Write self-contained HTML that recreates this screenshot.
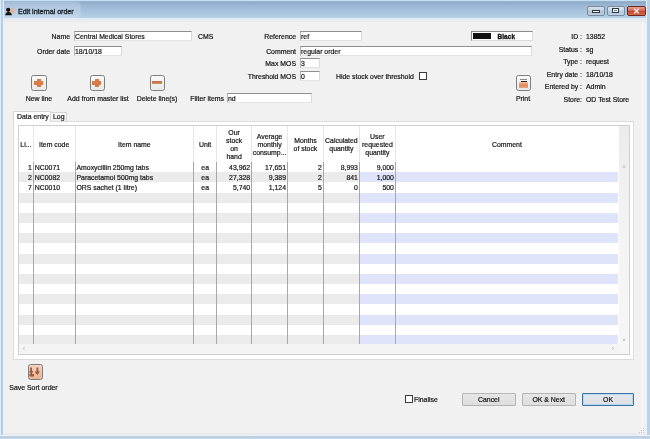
<!DOCTYPE html>
<html><head><meta charset="utf-8">
<style>
*{box-sizing:border-box;margin:0;padding:0}
html,body{width:650px;height:439px;overflow:hidden;background:#bfd3ea}
body{position:relative;font-family:"Liberation Sans",sans-serif;font-size:6.9px;color:#151515}
.a{position:absolute;white-space:nowrap}
.t{-webkit-text-stroke:0.2px #151515}
.lbl{text-align:right}
.inp{background:#fff;border:1px solid #b4b4b4;border-top-color:#8f8f8f;border-bottom-color:#e3e3e3;border-right-color:#dadada}
.btn{background:linear-gradient(180deg,#e6e6e6,#dedede);border:1px solid #b4b4b4;border-radius:1px;text-align:center}
.ico{width:16px;height:16px;border:1.5px solid #7e7e7e;border-radius:2.5px;background:linear-gradient(180deg,#fafafa,#e8e8e8)}
</style></head><body><div id="root" style="position:absolute;left:0;top:0;width:650px;height:439px;filter:blur(0.35px);">
<div class="a" style="left:0;top:0;width:650px;height:20px;background:linear-gradient(180deg,#c4e0f6 0,#c4e0f6 0.8px,#8eaac6 1.6px,#a0bad7 7px,#b1cde4 16.5px,#bccfe0 17.5px,#e2ebf7 18.5px,#e8eef7 20px)"></div>
<div class="a" style="left:4px;top:20px;width:642px;height:415px;background:#f1f1f1"></div>
<div class="a" style="left:4px;top:20px;width:642px;height:3px;background:linear-gradient(180deg,#e8eef7 0,#ebebeb 1px,#ededed 2px,#f1f1f1 3px)"></div>
<div class="a" style="left:0;top:0;width:4px;height:439px;background:linear-gradient(90deg,#d4ecfb 0,#d4ecfb 1px,#b9cde2 1px,#b9cde2 3px,#e6f1f8 3px)"></div>
<div class="a" style="left:646px;top:0;width:4px;height:439px;background:linear-gradient(90deg,#e3f3f8 0,#e3f3f8 1px,#bcd1ea 1px)"></div>
<div class="a" style="left:4px;top:433px;width:642px;height:1.5px;background:#eaeaee"></div>
<div class="a" style="left:0;top:435px;width:650px;height:4px;background:linear-gradient(180deg,#f2f7fc 0,#e8f0f8 0.8px,#b8c8da 1.6px,#c2d6ec 3px)"></div>
<div class="a" style="left:3px;top:1.5px;width:77px;height:16px;background:rgba(225,238,250,0.28);border-radius:4px;box-shadow:0 0 2px 1px rgba(225,238,250,0.2)"></div>
<div class="a t" style="left:18px;top:7.8px;line-height:8px;font-size:7.05px;color:#141c26;-webkit-text-stroke:0.3px #141c26">Edit internal order</div>
<svg class="a" style="left:5px;top:7px" width="11" height="9" viewBox="0 0 11 9">
<circle cx="7.3" cy="3.9" r="2.7" fill="#d9b9a2"/>
<circle cx="3.2" cy="2.8" r="2.1" fill="#111"/>
<path d="M0.3 8.2 C0.3 5.6 1.8 4.9 3.3 4.9 C5 4.9 6.9 5.6 6.9 8.2 Z" fill="#111"/>
</svg>
<div class="a" style="left:586.5px;top:5.5px;width:18.5px;height:10.5px;border:1px solid #7a8ba0;border-radius:2px;background:linear-gradient(180deg,#d6e0ec,#c3d0e0 45%,#b3c3d6 50%,#bccbdc)"></div>
<div class="a" style="left:592px;top:10.3px;width:7.5px;height:2.8px;background:#f6f8fb;border:0.8px solid #2c3744"></div>
<div class="a" style="left:606.5px;top:5.5px;width:18.5px;height:10.5px;border:1px solid #7a8ba0;border-radius:2px;background:linear-gradient(180deg,#d8e6f2,#c6d9ea 45%,#b2cade 50%,#bcd3e6)"></div>
<div class="a" style="left:612px;top:7.8px;width:7px;height:5px;border:1px solid #2c3744;border-top-width:1.6px;background:#f6f8fb"></div>
<div class="a" style="left:613.6px;top:9.6px;width:3.8px;height:1.8px;background:#7a8590"></div>
<div class="a" style="left:626.5px;top:5.5px;width:19.5px;height:10.5px;border:1px solid #6a2a20;border-radius:2px;background:linear-gradient(180deg,#e8a090,#d5654e 45%,#c3442a 50%,#d86a48)"></div>
<svg class="a" style="left:633px;top:7.8px" width="7" height="6" viewBox="0 0 7 6"><path d="M1.2 0.8 L5.8 5.2 M5.8 0.8 L1.2 5.2" stroke="#f8eeee" stroke-width="1.5"/></svg>
<div class="a t" style="left:20px;top:31.8px;line-height:9px;width:50px;text-align:right;">Name</div>
<div class="a inp" style="left:74px;top:31px;width:118px;height:10px"></div>
<div class="a t" style="left:75px;top:32.3px;line-height:9px;">Central Medical Stores</div>
<div class="a t" style="left:198px;top:31.8px;line-height:9px;">CMS</div>
<div class="a t" style="left:20px;top:46.8px;line-height:9px;width:50px;text-align:right;">Order date</div>
<div class="a inp" style="left:74px;top:46px;width:48px;height:10px"></div>
<div class="a t" style="left:75px;top:47.3px;line-height:9px;">18/10/18</div>
<div class="a t" style="left:240px;top:31.8px;line-height:9px;width:56px;text-align:right;">Reference</div>
<div class="a inp" style="left:300px;top:31px;width:62px;height:10px"></div>
<div class="a t" style="left:301px;top:32.3px;line-height:9px;">ref</div>
<div class="a t" style="left:240px;top:46.8px;line-height:9px;width:56px;text-align:right;">Comment</div>
<div class="a inp" style="left:300px;top:46px;width:232px;height:10px"></div>
<div class="a t" style="left:301px;top:47.3px;line-height:9px;">regular order</div>
<div class="a t" style="left:240px;top:58.699999999999996px;line-height:9px;width:56px;text-align:right;">Max MOS</div>
<div class="a inp" style="left:300px;top:57.9px;width:20px;height:10px"></div>
<div class="a t" style="left:301px;top:59.199999999999996px;line-height:9px;">3</div>
<div class="a t" style="left:220px;top:71.7px;line-height:9px;width:76px;text-align:right;">Threshold MOS</div>
<div class="a inp" style="left:300px;top:70.9px;width:20px;height:10px"></div>
<div class="a t" style="left:301px;top:72.2px;line-height:9px;">0</div>
<div class="a t" style="left:336px;top:71.8px;line-height:9px;">Hide stock over threshold</div>
<div class="a" style="left:419px;top:72px;width:8px;height:8px;border:1px solid #3a3a3a;background:#fff"></div>
<div class="a" style="left:471px;top:31px;width:62px;height:10px;border:1px solid #8a8a8a;border-bottom-color:#dcdcdc;border-right-color:#dcdcdc;background:#fff"></div>
<div class="a" style="left:473px;top:33px;width:18px;height:6px;background:#111"></div>
<div class="a t" style="left:497.5px;top:31.8px;line-height:9px;font-weight:bold;font-size:6.4px;-webkit-text-stroke:0.35px #111;letter-spacing:0.1px">Black</div>
<div class="a t" style="left:520px;top:32.199999999999996px;line-height:9px;width:62px;text-align:right;">ID :</div>
<div class="a t" style="left:586px;top:32.199999999999996px;line-height:9px;">13852</div>
<div class="a t" style="left:520px;top:44.699999999999996px;line-height:9px;width:62px;text-align:right;">Status :</div>
<div class="a t" style="left:586px;top:44.699999999999996px;line-height:9px;">sg</div>
<div class="a t" style="left:520px;top:57.199999999999996px;line-height:9px;width:62px;text-align:right;">Type :</div>
<div class="a t" style="left:586px;top:57.199999999999996px;line-height:9px;">request</div>
<div class="a t" style="left:520px;top:69.7px;line-height:9px;width:62px;text-align:right;">Entry date :</div>
<div class="a t" style="left:586px;top:69.7px;line-height:9px;">18/10/18</div>
<div class="a t" style="left:520px;top:82.2px;line-height:9px;width:62px;text-align:right;">Entered by :</div>
<div class="a t" style="left:586px;top:82.2px;line-height:9px;">Admin</div>
<div class="a t" style="left:520px;top:94.7px;line-height:9px;width:62px;text-align:right;">Store:</div>
<div class="a t" style="left:586px;top:94.7px;line-height:9px;">OD Test Store</div>
<div class="a ico" style="left:31.1px;top:75.3px;width:15.7px;height:15.5px"></div>
<div class="a" style="left:36.50px;top:78.70px;width:4.2px;height:8.8px;background:#d97a48"></div>
<div class="a" style="left:34.20px;top:81.00px;width:8.8px;height:4.2px;background:#d97a48"></div>
<div class="a t" style="left:14px;top:93.8px;line-height:9px;width:50px;text-align:center;">New line</div>
<div class="a ico" style="left:90px;top:75.3px;width:14.8px;height:15.5px"></div>
<div class="a" style="left:94.70px;top:78.70px;width:4.2px;height:8.8px;background:#d97a48"></div>
<div class="a" style="left:92.40px;top:81.00px;width:8.8px;height:4.2px;background:#d97a48"></div>
<div class="a t" style="left:57px;top:93.8px;line-height:9px;width:82px;text-align:center;">Add from master list</div>
<div class="a ico" style="left:149.8px;top:75.3px;width:15px;height:15.3px"></div>
<div class="a" style="left:152px;top:81px;width:9.8px;height:3.4px;background:linear-gradient(180deg,#c46a44,#d98a62)"></div>
<div class="a t" style="left:127px;top:93.8px;line-height:9px;width:60px;text-align:center;">Delete line(s)</div>
<div class="a t" style="left:168px;top:94.3px;line-height:9px;width:56px;text-align:right;">Filter items</div>
<div class="a inp" style="left:227px;top:93px;width:85px;height:10px"></div>
<div class="a t" style="left:228px;top:94.3px;line-height:9px;">nd</div>
<div class="a ico" style="left:515.6px;top:75px;width:15.6px;height:15.6px"></div>
<div class="a" style="left:520.3px;top:78.9px;width:6.8px;height:1.2px;background:#8a8a8a"></div>
<div class="a" style="left:520.6px;top:80.8px;width:6.6px;height:1.2px;background:#222"></div>
<div class="a" style="left:519px;top:82px;width:9.2px;height:6.2px;background:linear-gradient(180deg,#f6c4a0,#e4895a 50%,#eda47c);border-radius:0.5px"></div>
<div class="a t" style="left:501px;top:94.3px;line-height:9px;width:44px;text-align:center;">Print</div>
<div class="a" style="left:13px;top:121px;width:621px;height:239px;background:#fff;border:1px solid #dcdcdc"></div>
<div class="a" style="left:641.5px;top:22px;width:1px;height:413px;background:#f8f8f8"></div>
<div class="a" style="left:13px;top:111px;width:38px;height:11px;background:#fff;border:1px solid #d6d6d6;border-bottom:none"></div>
<div class="a t" style="left:17px;top:111.7px;line-height:9px;">Data entry</div>
<div class="a" style="left:51px;top:111.8px;width:16px;height:9.7px;background:linear-gradient(180deg,#f8f8f8,#f0f0f0);border:1px solid #d6d6d6;border-left:none;border-bottom:none"></div>
<div class="a t" style="left:53px;top:112.2px;line-height:9px;">Log</div>
<div class="a" style="left:18px;top:125px;width:612px;height:230px;background:#fff;border:1px solid #cfcfcf"></div>
<div class="a" style="left:19px;top:172.17px;width:340.4px;height:10.17px;background:#ebebeb"></div>
<div class="a" style="left:359.4px;top:172.17px;width:259.1px;height:10.17px;background:#e0e4fa"></div>
<div class="a" style="left:19px;top:192.51px;width:340.4px;height:10.17px;background:#ebebeb"></div>
<div class="a" style="left:359.4px;top:192.51px;width:259.1px;height:10.17px;background:#e0e4fa"></div>
<div class="a" style="left:19px;top:212.85px;width:340.4px;height:10.17px;background:#ebebeb"></div>
<div class="a" style="left:359.4px;top:212.85px;width:259.1px;height:10.17px;background:#e0e4fa"></div>
<div class="a" style="left:19px;top:233.19px;width:340.4px;height:10.17px;background:#ebebeb"></div>
<div class="a" style="left:359.4px;top:233.19px;width:259.1px;height:10.17px;background:#e0e4fa"></div>
<div class="a" style="left:19px;top:253.53px;width:340.4px;height:10.17px;background:#ebebeb"></div>
<div class="a" style="left:359.4px;top:253.53px;width:259.1px;height:10.17px;background:#e0e4fa"></div>
<div class="a" style="left:19px;top:273.87px;width:340.4px;height:10.17px;background:#ebebeb"></div>
<div class="a" style="left:359.4px;top:273.87px;width:259.1px;height:10.17px;background:#e0e4fa"></div>
<div class="a" style="left:19px;top:294.21px;width:340.4px;height:10.17px;background:#ebebeb"></div>
<div class="a" style="left:359.4px;top:294.21px;width:259.1px;height:10.17px;background:#e0e4fa"></div>
<div class="a" style="left:19px;top:314.55px;width:340.4px;height:10.17px;background:#ebebeb"></div>
<div class="a" style="left:359.4px;top:314.55px;width:259.1px;height:10.17px;background:#e0e4fa"></div>
<div class="a" style="left:19px;top:334.89px;width:340.4px;height:9.11px;background:#ebebeb"></div>
<div class="a" style="left:359.4px;top:334.89px;width:259.1px;height:9.11px;background:#e0e4fa"></div>
<div class="a" style="left:618.5px;top:126px;width:10.5px;height:228px;background:linear-gradient(180deg,#ebebeb 0,#efefef 40px,#f4f4f4 120px,#f6f6f6)"></div>
<div class="a" style="left:19px;top:344px;width:600px;height:10px;background:#f4f4f4"></div>
<div class="a" style="left:32.8px;top:126px;width:1px;height:36px;background:#e6e6e6"></div>
<div class="a" style="left:32.8px;top:162px;width:1px;height:182px;background:#a8a8a8"></div>
<div class="a" style="left:74.5px;top:126px;width:1px;height:36px;background:#e6e6e6"></div>
<div class="a" style="left:74.5px;top:162px;width:1px;height:182px;background:#a8a8a8"></div>
<div class="a" style="left:193.3px;top:126px;width:1px;height:36px;background:#e6e6e6"></div>
<div class="a" style="left:193.3px;top:162px;width:1px;height:182px;background:#a8a8a8"></div>
<div class="a" style="left:216.0px;top:126px;width:1px;height:36px;background:#e6e6e6"></div>
<div class="a" style="left:216.0px;top:162px;width:1px;height:182px;background:#a8a8a8"></div>
<div class="a" style="left:251.2px;top:126px;width:1px;height:36px;background:#e6e6e6"></div>
<div class="a" style="left:251.2px;top:162px;width:1px;height:182px;background:#a8a8a8"></div>
<div class="a" style="left:287.0px;top:126px;width:1px;height:36px;background:#e6e6e6"></div>
<div class="a" style="left:287.0px;top:162px;width:1px;height:182px;background:#a8a8a8"></div>
<div class="a" style="left:322.9px;top:126px;width:1px;height:36px;background:#e6e6e6"></div>
<div class="a" style="left:322.9px;top:162px;width:1px;height:182px;background:#a8a8a8"></div>
<div class="a" style="left:358.9px;top:126px;width:1px;height:36px;background:#e6e6e6"></div>
<div class="a" style="left:358.9px;top:162px;width:1px;height:182px;background:#a8a8a8"></div>
<div class="a" style="left:394.9px;top:126px;width:1px;height:36px;background:#e6e6e6"></div>
<div class="a" style="left:394.9px;top:162px;width:1px;height:182px;background:#a8a8a8"></div>
<div class="a t" style="left:18.5px;top:140.8px;line-height:8px;width:14.8px;text-align:center;">Li...</div>
<div class="a t" style="left:33.3px;top:140.8px;line-height:8px;width:41.7px;text-align:center;">Item code</div>
<div class="a t" style="left:75.0px;top:140.8px;line-height:8px;width:118.8px;text-align:center;">Item name</div>
<div class="a t" style="left:193.8px;top:140.8px;line-height:8px;width:22.7px;text-align:center;">Unit</div>
<div class="a t" style="left:216.5px;top:128.8px;line-height:8px;width:35.2px;text-align:center;">Our<br>stock<br>on<br>hand</div>
<div class="a t" style="left:251.7px;top:132.8px;line-height:8px;width:35.8px;text-align:center;">Average<br>monthly<br>consump...</div>
<div class="a t" style="left:287.5px;top:136.8px;line-height:8px;width:35.9px;text-align:center;">Months<br>of stock</div>
<div class="a t" style="left:323.4px;top:136.8px;line-height:8px;width:36.0px;text-align:center;">Calculated<br>quantity</div>
<div class="a t" style="left:359.4px;top:132.8px;line-height:8px;width:36.0px;text-align:center;">User<br>requested<br>quantity</div>
<div class="a t" style="left:395.4px;top:140.8px;line-height:8px;width:223.1px;text-align:center;">Comment</div>
<div class="a t" style="left:18.5px;top:162.70000000000002px;line-height:10.17px;width:14.8px;text-align:right;padding:0 1.5px">1</div>
<div class="a t" style="left:33.3px;top:162.70000000000002px;line-height:10.17px;width:41.7px;text-align:left;padding:0 1.5px">NC0071</div>
<div class="a t" style="left:75.0px;top:162.70000000000002px;line-height:10.17px;width:118.8px;text-align:left;padding:0 1.5px">Amoxycillin 250mg tabs</div>
<div class="a t" style="left:193.8px;top:162.70000000000002px;line-height:10.17px;width:22.7px;text-align:center;padding:0 1.5px">ea</div>
<div class="a t" style="left:216.5px;top:162.70000000000002px;line-height:10.17px;width:35.2px;text-align:right;padding:0 1.5px">43,962</div>
<div class="a t" style="left:251.7px;top:162.70000000000002px;line-height:10.17px;width:35.8px;text-align:right;padding:0 1.5px">17,651</div>
<div class="a t" style="left:287.5px;top:162.70000000000002px;line-height:10.17px;width:35.9px;text-align:right;padding:0 1.5px">2</div>
<div class="a t" style="left:323.4px;top:162.70000000000002px;line-height:10.17px;width:36.0px;text-align:right;padding:0 1.5px">8,993</div>
<div class="a t" style="left:359.4px;top:162.70000000000002px;line-height:10.17px;width:36.0px;text-align:right;padding:0 1.5px">9,000</div>
<div class="a t" style="left:18.5px;top:172.87px;line-height:10.17px;width:14.8px;text-align:right;padding:0 1.5px">2</div>
<div class="a t" style="left:33.3px;top:172.87px;line-height:10.17px;width:41.7px;text-align:left;padding:0 1.5px">NC0082</div>
<div class="a t" style="left:75.0px;top:172.87px;line-height:10.17px;width:118.8px;text-align:left;padding:0 1.5px">Paracetamol 500mg tabs</div>
<div class="a t" style="left:193.8px;top:172.87px;line-height:10.17px;width:22.7px;text-align:center;padding:0 1.5px">ea</div>
<div class="a t" style="left:216.5px;top:172.87px;line-height:10.17px;width:35.2px;text-align:right;padding:0 1.5px">27,328</div>
<div class="a t" style="left:251.7px;top:172.87px;line-height:10.17px;width:35.8px;text-align:right;padding:0 1.5px">9,389</div>
<div class="a t" style="left:287.5px;top:172.87px;line-height:10.17px;width:35.9px;text-align:right;padding:0 1.5px">2</div>
<div class="a t" style="left:323.4px;top:172.87px;line-height:10.17px;width:36.0px;text-align:right;padding:0 1.5px">841</div>
<div class="a t" style="left:359.4px;top:172.87px;line-height:10.17px;width:36.0px;text-align:right;padding:0 1.5px">1,000</div>
<div class="a t" style="left:18.5px;top:183.04000000000002px;line-height:10.17px;width:14.8px;text-align:right;padding:0 1.5px">7</div>
<div class="a t" style="left:33.3px;top:183.04000000000002px;line-height:10.17px;width:41.7px;text-align:left;padding:0 1.5px">NC0010</div>
<div class="a t" style="left:75.0px;top:183.04000000000002px;line-height:10.17px;width:118.8px;text-align:left;padding:0 1.5px">ORS sachet (1 litre)</div>
<div class="a t" style="left:193.8px;top:183.04000000000002px;line-height:10.17px;width:22.7px;text-align:center;padding:0 1.5px">ea</div>
<div class="a t" style="left:216.5px;top:183.04000000000002px;line-height:10.17px;width:35.2px;text-align:right;padding:0 1.5px">5,740</div>
<div class="a t" style="left:251.7px;top:183.04000000000002px;line-height:10.17px;width:35.8px;text-align:right;padding:0 1.5px">1,124</div>
<div class="a t" style="left:287.5px;top:183.04000000000002px;line-height:10.17px;width:35.9px;text-align:right;padding:0 1.5px">5</div>
<div class="a t" style="left:323.4px;top:183.04000000000002px;line-height:10.17px;width:36.0px;text-align:right;padding:0 1.5px">0</div>
<div class="a t" style="left:359.4px;top:183.04000000000002px;line-height:10.17px;width:36.0px;text-align:right;padding:0 1.5px">500</div>
<div class="a" style="left:620px;top:163px;width:8px;text-align:center;font-size:6px;color:#9a9a9a;line-height:8px">&#x2C4;</div>
<div class="a" style="left:620px;top:336px;width:8px;text-align:center;font-size:6px;color:#9a9a9a;line-height:8px">&#x2C5;</div>
<div class="a" style="left:20px;top:345px;width:8px;text-align:center;font-size:7px;color:#b0b0b0;line-height:8px">&#x2039;</div>
<div class="a" style="left:609px;top:345px;width:8px;text-align:center;font-size:7px;color:#b0b0b0;line-height:8px">&#x203A;</div>
<div class="a ico" style="left:27.5px;top:364px;width:15.5px;height:15.6px;background:linear-gradient(180deg,#f6d2bd,#eab393)"></div>
<svg class="a" style="left:29.3px;top:365.9px" width="12" height="12" viewBox="0 0 12 12"><g fill="#9b5a3a"><rect x="1.2" y="1.5" width="1.8" height="8"/><rect x="0.5" y="5" width="3.5" height="1.5"/><rect x="0.5" y="8" width="4.5" height="2.5"/><rect x="7.5" y="1.5" width="1.8" height="6"/><path d="M5.5 5.5 L11 5.5 L8.4 9 Z"/></g></svg>
<div class="a t" style="left:5px;top:382.90000000000003px;line-height:9px;width:57px;text-align:center;">Save Sort order</div>
<div class="a" style="left:405px;top:395.2px;width:7.6px;height:7.6px;border:1px solid #3a3a3a;background:#fff"></div>
<div class="a t" style="left:414px;top:395.40000000000003px;line-height:9px;">Finalise</div>
<div class="a btn" style="left:462px;top:392.5px;width:53.5px;height:13px"></div>
<div class="a t" style="left:462px;top:394.6px;line-height:9px;width:53.5px;text-align:center;">Cancel</div>
<div class="a btn" style="left:522px;top:392.5px;width:53.5px;height:13px"></div>
<div class="a t" style="left:522px;top:394.6px;line-height:9px;width:53.5px;text-align:center;">OK &amp; Next</div>
<div class="a btn" style="left:582px;top:392.5px;width:52px;height:13px;border:1.3px solid #3f72a0;box-shadow:inset 0 0 0 0.8px #a8d4f2;background:linear-gradient(180deg,#e4e8ec,#dcdfe3)"></div>
<div class="a t" style="left:582px;top:394.6px;line-height:9px;width:52px;text-align:center;">OK</div>
<svg class="a" style="left:637px;top:426px" width="8" height="8" viewBox="0 0 8 8"><g fill="#c4c4c4"><rect x="6" y="2" width="1" height="1"/><rect x="4" y="4" width="1" height="1"/><rect x="6" y="4" width="1" height="1"/><rect x="2" y="6" width="1" height="1"/><rect x="4" y="6" width="1" height="1"/><rect x="6" y="6" width="1" height="1"/></g></svg>
</div></body></html>
